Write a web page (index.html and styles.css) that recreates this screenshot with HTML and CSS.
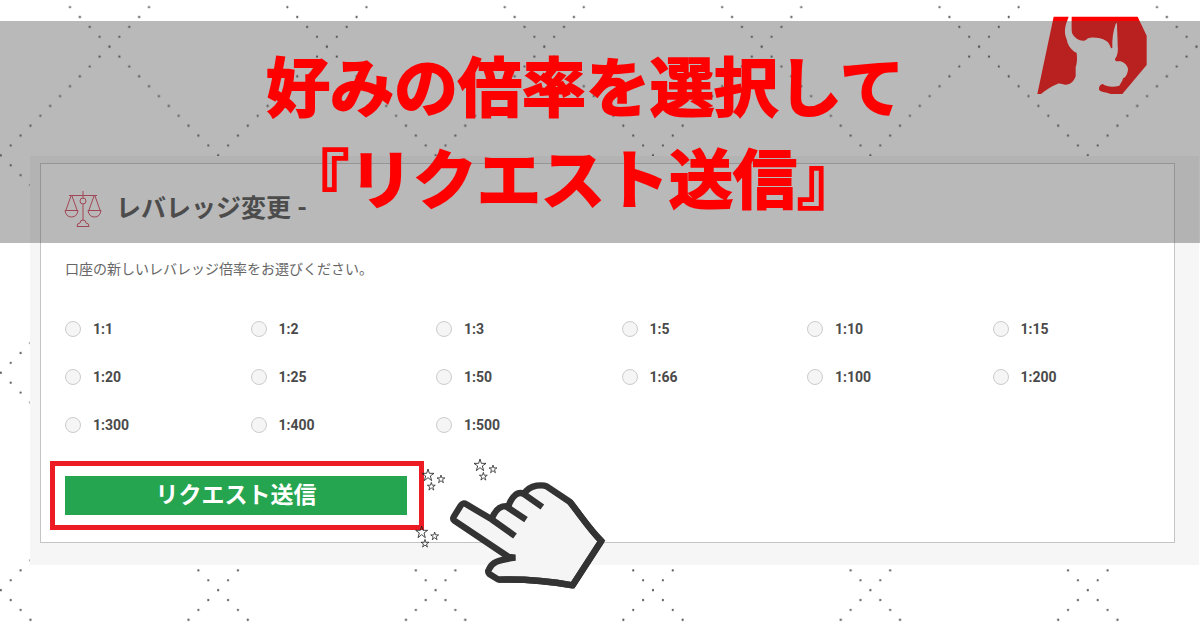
FILE: index.html
```html
<!DOCTYPE html>
<html lang="ja">
<head>
<meta charset="utf-8">
<title>レバレッジ変更</title>
<link rel="stylesheet" href="styles.css">
</head>
<body>
<div class="stage">
  <svg class="dots" aria-hidden="true">
    <defs>
      <pattern id="lattice" width="217.4" height="217.4" patternUnits="userSpaceOnUse" patternTransform="translate(0.8 -62)">
        <g fill="none" stroke="#555" stroke-width="2.3" stroke-linecap="round" stroke-dasharray="0 1">
          <path pathLength="24" d="M-9.88-9.88 227.28 227.28"/>
          <path pathLength="24" d="M227.28-9.88-9.88 227.28"/>
        </g>
      </pattern>
    </defs>
    <rect width="100%" height="100%" fill="url(#lattice)"/>
  </svg>

  <svg class="logo" viewBox="0 0 450 330" aria-hidden="true">
    <g fill="#f00">
      <path d="M101 50H146C141 65 134 77 135 98C136 112 142 118 142 127C148 143 157 153 170 159C172 176 171 190 167 202V229C162 243 152 254 137 254C128 254 119 248 112 252C94 259 76 271 63 282H52Z"/>
      <path d="M155 50H353C362 70 370 85 380 107V195L307 282H272C262 277 241 276 237 269C236 259 241 253 248 252C261 261 280 262 298 257C302 249 308 244 309 235C317 232 324 220 324 206C320 193 311 187 302 184H290C285 184 285 178 285 177C293 167 295 151 293 137C293 113 291 93 291 70C289 69 288 70 287 72C279 94 276 120 277 144L273 145C270 135 266 127 259 123C244 114 230 112 211 113C200 114 199 122 190 122C176 122 163 112 157 101C154 93 155 70 155 50Z"/>
    </g>
  </svg>

  <main class="panel">
    <form class="card">
      <header class="card-head">
        <svg class="scales" viewBox="0 0 38 38" aria-hidden="true">
          <g fill="none" stroke="#d8405a" stroke-width="1">
            <path d="M19 1V8M5 5.500H33M19 14V30"/>
            <circle cx="19" cy="11" r="3"/>
            <path d="M7 6 2 20M8 6 13 20M30 6 25 20M31 6 36 20M1 20.500H14Q13 27 7.500 27T1 20.500ZM24 20.500H37Q36 27 30.500 27T24 20.500ZM13 36.500Q13 33 16 33Q16 30 19 30T22 33Q25 33 25 36.500Z"/>
          </g>
        </svg>
        <h1 class="card-title">レバレッジ変更 -</h1>
      </header>
      <p class="lead" id="lead">口座の新しいレバレッジ倍率をお選びください。</p>
      <div class="ratios" role="radiogroup" aria-labelledby="lead">
        <label class="ratio"><input type="radio" name="ratio">1:1</label>
        <label class="ratio"><input type="radio" name="ratio">1:2</label>
        <label class="ratio"><input type="radio" name="ratio">1:3</label>
        <label class="ratio"><input type="radio" name="ratio">1:5</label>
        <label class="ratio"><input type="radio" name="ratio">1:10</label>
        <label class="ratio"><input type="radio" name="ratio">1:15</label>
        <label class="ratio"><input type="radio" name="ratio">1:20</label>
        <label class="ratio"><input type="radio" name="ratio">1:25</label>
        <label class="ratio"><input type="radio" name="ratio">1:50</label>
        <label class="ratio"><input type="radio" name="ratio">1:66</label>
        <label class="ratio"><input type="radio" name="ratio">1:100</label>
        <label class="ratio"><input type="radio" name="ratio">1:200</label>
        <label class="ratio"><input type="radio" name="ratio">1:300</label>
        <label class="ratio"><input type="radio" name="ratio">1:400</label>
        <label class="ratio"><input type="radio" name="ratio">1:500</label>
      </div>
      <div class="highlight">
        <button class="submit" type="button">リクエスト送信</button>
      </div>
    </form>
  </main>

  <div class="banner">
    <p class="banner-line">好みの倍率を選択して</p>
    <p class="banner-line banner-line-quote">『リクエスト送信』</p>
  </div>

  <svg class="pointer" viewBox="0 0 720 564" aria-hidden="true">
    <defs>
      <path id="star" d="M0-18 4-5H18L7 3 11 17 0 8-11 17-7 3-18-5H-4Z"/>
      <g id="sparkle" fill="none" stroke="#222">
        <use href="#star" stroke-width="2.500"/>
        <use href="#star" stroke-width="3.500" transform="translate(39 12) scale(.66)"/>
        <use href="#star" stroke-width="3.500" transform="translate(10 34) scale(.66)"/>
      </g>
    </defs>
    <g stroke="#333" stroke-width="19">
      <path fill="#f5f5f5" stroke-linejoin="bevel" d="M346 353 326 351 163 242Q157 237 162 229L182 197Q189 186 199 193L275 238Q283 215 298 204Q310 197 325 199Q333 175 347 164Q358 156 373 161Q384 142 410 137Q430 134 440 139L510 186C546 232 570 269 604 303L518 436C440 422 370 417 295 419L268 402Q262 395 267 388C276 367 290 361 346 353Z"/>
      <path fill="none" d="M510 186C546 232 570 269 604 303L518 436C440 422 370 417 295 419"/>
      <path fill="none" d="M275 238 345 288M318 199 378 239M367 159 427 201"/>
    </g>
    <use href="#sparkle" x="240" y="75"/>
    <use href="#sparkle" x="84" y="105"/>
    <use href="#sparkle" x="65" y="276"/>
  </svg>
</div>
</body>
</html>
```
FILE: styles.css
```css
* {
  box-sizing: border-box;
}

body {
  margin: 0;
  background: #fff;
  color: #4a4a4a;
  font-family: Roboto, "Noto Sans CJK JP", sans-serif;
}

.stage {
  position: relative;
  min-height: 100vh;
  padding-top: 156px;
  overflow: hidden;
}

.dots {
  position: absolute;
  inset: 0;
  width: 100%;
  height: 100%;
}

.logo {
  position: absolute;
  top: 0;
  right: 30px;
  width: 150px;
  height: 110px;
}

.panel {
  position: relative;
  margin: 0 1px 0 30px;
  padding: 7px 24px 22px 10px;
  background: #f6f6f6;
}

.card {
  padding: 25px 24px 12px;
  border: 1px solid #c4c4c4;
  background: #fff;
}

.card-head {
  display: flex;
  align-items: center;
  gap: 14px;
  height: 40px;
}

.scales {
  width: 38px;
  height: 38px;
  margin-left: -1px;
}

.card-title {
  margin: 0;
  font-size: 25px;
  line-height: 40px;
  font-weight: 700;
}

.lead {
  margin: 30px 0 40px;
  color: #666;
  font-size: 14px;
  line-height: 20px;
  font-weight: 400;
}

.ratios {
  display: grid;
  grid-template-columns: repeat(6, 1fr);
  gap: 28px;
}

.ratio {
  display: flex;
  align-items: center;
  gap: 12px;
  font-size: 14px;
  line-height: 20px;
  font-weight: 700;
}

.ratio input {
  appearance: none;
  width: 16px;
  height: 16px;
  margin: 0;
  border: 1px solid #ccc;
  border-radius: 50%;
  background: #f5f5f5;
}

.ratio input:checked {
  background: #25a550;
}

.highlight {
  width: 374px;
  max-width: 100%;
  margin: 26px 0 0 -15px;
  padding: 10px;
  border: 5px solid #ed1c24;
}

.submit {
  display: block;
  width: 342px;
  max-width: 100%;
  height: 39px;
  padding: 0 0 5px;
  border: 0;
  background: #25a550;
  color: #fff;
  font: 700 23px/34px "Noto Sans CJK JP", sans-serif;
}

.banner {
  position: absolute;
  top: 21px;
  left: 0;
  right: 0;
  padding: 16px 30px 22px 0;
  background: rgba(80, 80, 80, 0.4);
  color: #f00;
  text-align: center;
}

.banner-line {
  margin: 0;
  font: 700 64px/92px "Noto Sans CJK JP", sans-serif;
  -webkit-text-stroke: 2px #f00;
}

.banner-line-quote {
  padding-right: 24px;
  font-feature-settings: "halt";
}

.pointer {
  position: absolute;
  top: 440px;
  left: 400px;
  width: 240px;
  height: 188px;
  pointer-events: none;
}
```
